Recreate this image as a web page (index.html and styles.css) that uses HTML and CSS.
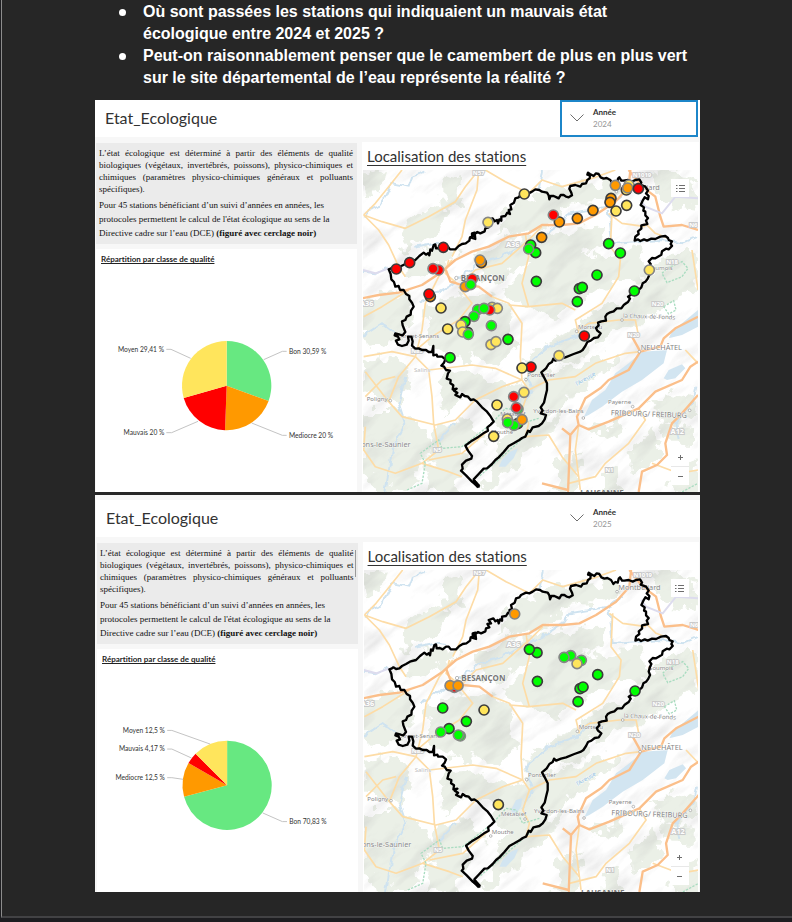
FILE: index.html
```html
<!DOCTYPE html>
<html lang="fr">
<head>
    <meta charset="UTF-8">
    <meta name="viewport" content="width=device-width, initial-scale=1.0">
    <title>Etat écologique des stations</title>
    <link rel="stylesheet" href="styles.css">
</head>
<body>
<main class="page">
    <ul class="questions">
        <li>Où sont passées les stations qui indiquaient un mauvais état écologique entre 2024 et 2025 ?</li>
        <li>Peut-on raisonnablement penser que le camembert de plus en plus vert sur le site départemental de l’eau représente la réalité ?</li>
    </ul>

    <!-- Tableau de bord 2024 -->
    <section class="dashboard">
        <header class="topbar">
            <h2 class="title">Etat_Ecologique</h2>
            <div class="selector selected">
                <svg class="chevron" viewBox="0 0 14 8"><path d="M.5 .5 7 7 13.500 .5"/></svg>
                <div class="field">
                    <label for="annee2024">Année</label>
                    <select id="annee2024"><option>2024</option><option>2025</option></select>
                </div>
            </div>
        </header>
        <div class="columns">
            <div class="left">
                <div class="note">
                    <p class="intro">L’état écologique est déterminé à partir des éléments de qualité biologiques (végétaux, invertébrés, poissons), physico-chimiques et chimiques (paramètres physico-chimiques généraux et polluants spécifiques).</p>
                    <p class="detail">Pour 45 stations bénéficiant d’un suivi d’années en années, les protocoles permettent le calcul de l'état écologique au sens de la Directive cadre sur l’eau (DCE) <b>(figuré avec cerclage noir)</b></p>
                </div>
                <div class="chart">
                    <h3>Répartition par classe de qualité</h3>
                    <svg class="pie" viewBox="3 90 783 666">
                        <path class="bon" d="M395 437V303A134 134 0 0 1 520.800 483.100Z"/>
                        <path class="mediocre" d="M395 437 520.800 483.100A134 134 0 0 1 390.100 570.900Z"/>
                        <path class="mauvais" d="M395 437 390.100 570.900A134 134 0 0 1 266.100 473.700Z"/>
                        <path class="moyen" d="M395 437 266.100 473.700A134 134 0 0 1 395 303Z"/>
                        <path class="leader" d="M506 359 562 334H575M470 549 562 586H575M309 544 230 578H214M287 355 228 328H214"/>
                        <text x="582" y="342">Bon 30,59 %</text>
                        <text x="582" y="594">Mediocre 20 %</text>
                        <text class="end" x="208" y="586">Mauvais 20 %</text>
                        <text class="end" x="207" y="336">Moyen 29,41 %</text>
                    </svg>
                </div>
            </div>
            <div class="right">
                <h2 class="title underlined">Localisation des stations</h2>
                <div class="map">
                    <svg class="mapview" viewBox="3 240 1005 966" preserveAspectRatio="xMidYMin slice">
                        <defs>
                            <filter id="rough" x="-5%" y="-5%" width="110%" height="110%">
                                <feTurbulence type="fractalNoise" baseFrequency="0.025" numOctaves="3" seed="4"/>
                                <feDisplacementMap in="SourceGraphic" scale="75" xChannelSelector="R" yChannelSelector="G"/>
                            </filter>
                            <filter id="wiggle" x="-5%" y="-5%" width="110%" height="110%">
                                <feTurbulence type="fractalNoise" baseFrequency="0.05" numOctaves="1" seed="9"/>
                                <feDisplacementMap in="SourceGraphic" scale="22" xChannelSelector="R" yChannelSelector="G"/>
                            </filter>
                            <filter id="relief" x="0" y="0" width="100%" height="100%">
                                <feTurbulence type="fractalNoise" baseFrequency="0.006 0.020" numOctaves="4" seed="12"/>
                                <feColorMatrix type="matrix" values="0 0 0 0 .45  0 0 0 0 .45  0 0 0 0 .45  2.200 0 0 0 -1.060"/>
                            </filter>
                            <g id="basemap">
                                <path fill="#fff" d="M0 235H1012V1212H0Z"/>
                                <g fill="#ebf0e7" filter="url(#rough)">
                                    <path d="M0 250 60 240 50 300 10 330ZM130 410 200 350 260 360 220 430 150 470 110 490ZM240 260 300 240 290 330 250 370ZM150 490 230 470 300 480 240 530 140 560ZM450 340 540 300 690 280 790 290 760 330 600 350 560 400 440 440 400 420Z"/>
                                    <path d="M0 640 70 600 140 620 150 700 110 750 40 770 0 740ZM330 500 470 440 620 420 730 410 720 470 560 500 420 560 360 580ZM540 500 620 480 720 500 840 470 850 560 700 600 580 680 470 640 420 600ZM200 650 330 600 440 640 460 760 400 830 280 800 190 760Z"/>
                                    <path d="M860 560 900 500 1010 490 1010 600 920 640 850 700 780 700 700 760 640 720 700 660 800 630ZM560 760 640 700 690 720 660 800 560 840 500 890 480 820ZM0 810 100 800 150 870 110 940 0 900ZM0 960 80 960 180 1000 210 1080 130 1200 50 1210 0 1130Z"/>
                                    <path d="M230 860 330 840 440 890 400 960 300 920 240 960ZM220 1010 330 990 370 1040 300 1080 330 1120 280 1210 190 1200ZM400 920 480 880 560 850 700 810 780 800 690 870 590 960 540 1050 430 1150 380 1210 350 1190 430 1050 390 980Z"/>
                                    <path d="M600 1110 660 1090 640 1210 560 1210ZM700 1010 780 980 770 1040 690 1050ZM800 1080 880 1020 890 1090 810 1150ZM870 940 930 910 1010 930 990 990 900 1000ZM720 1150 780 1140 790 1210 720 1210ZM940 1120 1010 1090 1010 1210 930 1210ZM860 250 940 240 1010 290 1010 360 920 350ZM900 1000 990 1010 990 1070 920 1070Z"/>
                                </g>
                                <g transform="rotate(-38 500 720)" opacity=".36">
                                    <rect x="-240" y="-60" width="1500" height="1550" filter="url(#relief)"/>
                                </g>
                                <g fill="#d2e5f1">
                                    <path d="M665 982 690 930 730 900 760 850 800 820 840 785 915 780 905 820 840 870 780 905 720 950 680 975ZM905 865 920 840 960 823 970 835 940 865 915 870ZM930 725 960 700 1008 660V710L960 735 920 745ZM410 1130 420 1110 445 1085 468 1075 455 1105 430 1130ZM445 960 460 930 478 925 475 950 455 980Z"/>
                                </g>
                                <g class="river" filter="url(#wiggle)">
                                    <path d="M190 245 150 260 140 290 90 280 70 320 50 350 20 360 5 380M3 545 40 550 80 535M160 470 210 460 250 465M540 240 530 300M170 640 220 610 260 590 300 560 350 520 420 500 470 470 540 440 600 400 620 370 680 360 740 350 780 320M745 460 800 455 900 450 960 460 1008 440"/>
                                    <path d="M510 895 490 840 500 820 560 770 640 740 690 690M100 730 60 700 0 740M130 860 110 940 130 1000 90 1080 70 1206M220 1060 280 1000M480 960 510 900M1000 890 990 940 940 1000 950 1050M740 360 750 460"/>
                                </g>
                                <g class="minor">
                                    <path d="M5 375 40 340 80 290 120 240M5 375 60 395 130 415 200 380 280 335 310 290 350 240M5 375 50 420 80 465 110 530 130 560M370 240 430 275 500 310 540 270 600 290 700 262 760 240M350 240 345 300 310 390 300 440 270 500M270 510 230 560 190 640 180 720 160 800 110 860 80 935"/>
                                    <path d="M260 510 250 550 290 585M290 590 330 640 290 690 210 740 150 790M5 680 60 650 140 600M300 580 340 540 420 520 500 450 540 410M390 620 440 640 480 700 475 800 480 870M5 800 90 785 160 800 200 840 330 825 400 835 480 870M480 870 420 890 340 930 280 990 220 1005 120 980 80 935 10 845M200 840 210 920 215 1000 230 1080 180 1120"/>
                                    <path d="M10 1010 5 1080 40 1130 100 1150 180 1120 260 1145 300 1160M380 1020 300 1090 200 1110M480 870 500 900 560 870 640 860 700 820 790 790 835 785M500 900 480 960 500 1000 490 1040M490 1040 560 1035 600 1100 650 1160M830 955 850 990 800 1060 730 1120 700 1160 620 1180M750 370 745 470 775 510 770 560 720 640 640 690 650 730"/>
                                    <path d="M490 430 500 500 480 580 500 650 440 645M500 650 600 640 640 660M650 720 680 700 770 690 820 690 830 740M650 1005 640 1080 655 1200M10 920 60 870 100 860M850 400 880 430 920 445M740 370 780 400 850 410M990 480 1008 600M970 780 1008 820M870 1120 950 1150 1008 1140"/>
                                </g>
                                <g class="major">
                                    <path d="M0 625 50 615 110 608 180 585 240 545 280 510 330 485 380 470 440 440 500 430 540 405 600 405 650 400 700 375 760 335 800 290 805 240M800 240 840 290 880 320 895 380 905 410 960 405 1008 420M250 535 265 575 300 585 350 590 390 620"/>
                                    <path d="M1008 680 940 715 905 745 895 770 835 785 800 840 740 870 715 895 670 925 645 980 650 1005 625 1035 618 1206M650 1005 680 1018 740 995 830 955 880 905 960 870 985 830 1008 815M1008 915 960 970 930 1000 910 1060 915 1095 885 1125 840 1145 830 1206M600 1015 625 1035M540 1180 618 1200M810 740 835 785"/>
                                </g>
                                <path class="park" d="M900 550 915 535 960 515 978 535 960 560 915 578ZM905 650 935 632 942 660 920 672ZM135 1200 180 1180 190 1120 175 1090 230 1050 240 1075 300 1070 390 1000 430 955 460 960 480 1000 530 985M500 1030 420 1100 350 1160M960 1206 1008 1180"/>
                                <path fill="none" stroke="#dddcee" stroke-width="6" d="M835 330 850 350 900 370 940 320 1008 325M3 540 40 550 80 535"/>
                                <g class="tags">
                                    <text x="350" y="254">N57</text><text x="840" y="260">N1019</text><text x="452" y="472" class="big">A36</text>
                                    <text x="14" y="648" class="big">A36</text><text x="994" y="411">N6</text><text x="930" y="523">N18</text>
                                    <text x="887" y="648">N20</text><text x="815" y="741">N20</text><text x="226" y="1087">N5</text>
                                    <text x="946" y="1031" class="big">A12</text><text x="742" y="1147">N1</text><text x="165" y="790">N83</text>
                                </g>
                                <g class="town">
                                    <circle cx="763" cy="305" r="4"/><circle cx="283" cy="564" r="5"/><circle cx="780" cy="690" r="4"/><circle cx="644" cy="724" r="4"/>
                                    <circle cx="832" cy="785" r="4"/><circle cx="492" cy="869" r="4"/><circle cx="812" cy="950" r="4"/><circle cx="664" cy="984" r="4"/>
                                    <circle cx="487" cy="987" r="4"/><circle cx="384" cy="1038" r="4"/><circle cx="85" cy="932" r="4"/><circle cx="983" cy="961" r="4"/>
                                    <text x="767" y="299" class="big">Montbéliard</text>
                                    <text x="296" y="573" class="capital">BESANÇON</text>
                                    <text x="856" y="541">Goumois</text>
                                    <text x="783" y="683" transform="rotate(2 783 683)">la Chaux-de-Fonds</text>
                                    <text x="648" y="717">Morteau</text>
                                    <text x="836" y="780" class="big">NEUCHÂTEL</text>
                                    <text x="496" y="862">Pontarlier</text>
                                    <text x="738" y="941">Payerne</text>
                                    <text x="746" y="976" class="big" transform="rotate(2 746 976)">FRIBOURG/ FREIBURG</text>
                                    <text x="514" y="970">Yverdon-les-Bains</text>
                                    <text x="415" y="979">Métabief</text>
                                    <text x="387" y="1033">Mouthe</text>
                                    <text x="14" y="933">Poligny</text>
                                    <text x="-14" y="1070" class="big">Lons-le-Saunier</text>
                                    <text x="115" y="745">Arc-et-Senans</text>
                                    <text x="156" y="845" class="faint">Salins</text>
                                    <text x="655" y="1218" class="capital">LAUSANNE</text>
                                    <text x="645" y="888" class="water" transform="rotate(-30 645 888)">l’Areuse</text>
                                </g>
                                <path class="limit" d="M80 538 86 536 92 532 100 537 110 535 118 528 130 522 144 514 160 510 172 498 185 488 192 494 198 490 202 496 205 478 210 482 215 465 220 463 222 475 231 474 240 478 250 470 258 470 264 478 280 478 290 468 300 462 311 460 322 452 324 442 330 440 330 430 338 428 340 447 330 444 336 434 346 426 355 430 368 424 370 415 380 412 374 402 385 400 378 390 392 385 398 394 405 390 408 400 412 388 418 392 418 380 430 378 436 368 444 372 440 360 448 358 445 345 456 338 460 325 470 322 475 315 490 308 500 310 510 305 520 298 532 300 540 305 555 308 560 316 562 328 566 318 575 318 584 322 590 325 596 315 605 315 612 320 620 322 630 316 628 308 622 296 625 288 640 285 655 290 660 282 672 280 676 270 683 265 684 256 676 254 678 248 684 252 695 258 702 250 710 252 716 262 725 266 734 264 745 270 752 282 758 276 765 278 768 266 772 262 778 272 785 272 798 270 810 275 820 270 832 268 838 278 834 284 850 290 858 302 852 310 860 318 858 328 848 322 842 332 836 345 846 352 844 362 850 365 850 376 858 384 852 392 856 402 838 406 838 416 828 424 830 432 820 440 818 452 828 448 835 453 846 448 855 452 868 446 880 447 895 440 910 438 918 444 920 450 930 454 926 462 930 468 920 478 912 476 900 484 898 494 888 500 880 505 870 504 860 514 866 522 862 530 858 545 862 555 856 568 850 575 842 580 838 592 830 600 820 606 810 612 798 620 804 626 798 636 786 644 778 655 764 655 755 664 742 668 735 672 730 680 732 692 718 694 708 698 710 706 702 714 706 722 716 730 708 742 696 744 686 752 676 756 670 768 662 780 655 785 635 792 610 802 595 806 580 812 574 806 570 816 560 822 552 835 538 847 546 862 555 880 555 900 550 920 546 938 536 952 542 962 536 970 552 975 548 988 540 1000 530 1008 512 1012 504 1026 498 1022 490 1040 480 1044 472 1050 455 1060 440 1068 425 1086 410 1102 400 1110 390 1122 375 1135 365 1136 350 1152 335 1168 350 1190 330 1175 312 1156 297 1142 302 1136 300 1124 312 1112 328 1106 330 1098 318 1082 310 1067 330 1052 350 1040 364 1030 378 1022 376 1012 386 1004 395 995 385 978 375 965 360 952 345 935 335 928 326 930 318 920 308 918 300 912 295 922 280 915 286 908 276 902 284 896 272 898 274 886 265 880 266 870 254 866 258 850 264 842 252 840 246 830 238 827 246 818 250 808 240 800 226 800 224 794 214 796 214 768 210 786 200 786 192 780 180 780 170 775 160 776 150 767 152 754 148 740 138 740 140 752 134 764 120 768 108 764 102 752 112 748 108 740 98 736 100 730 114 734 122 736 130 726 122 706 120 694 130 690 134 680 146 674 147 662 155 650 150 638 142 628 142 618 132 612 125 600 114 600 110 588 100 590 96 576 88 568 86 552Z"/>
                                <path d="m336 1166 19 20-9 9-18-19Z"/>
                            </g>
                        </defs>
                        <use href="#basemap"/>
                        <g class="stations" id="stations2024"></g>
                    </svg>
                    <button class="legend" type="button" aria-label="Légende"><svg viewBox="0 0 9 9"><path d="M0 1.500h1.500M3 1.500h6M0 4.500h1.500M3 4.500h6M0 7.500h1.500M3 7.500h6"/></svg></button>
                    <div class="zoom">
                        <button type="button" aria-label="Zoom avant"><svg viewBox="0 0 9 9"><path d="M2 4.500h5M4.500 2v5"/></svg></button>
                        <button type="button" aria-label="Zoom arrière"><svg viewBox="0 0 9 9"><path d="M2 4.500h5"/></svg></button>
                    </div>
                </div>
            </div>
        </div>
    </section>

    <!-- Tableau de bord 2025 -->
    <section class="dashboard second">
        <header class="topbar">
            <h2 class="title">Etat_Ecologique</h2>
            <div class="selector">
                <svg class="chevron" viewBox="0 0 14 8"><path d="M.5 .5 7 7 13.500 .5"/></svg>
                <div class="field">
                    <label for="annee2025">Année</label>
                    <select id="annee2025"><option>2025</option><option>2024</option></select>
                </div>
            </div>
        </header>
        <div class="columns">
            <div class="left">
                <div class="note scrolling">
                    <p class="intro">L’état écologique est déterminé à partir des éléments de qualité biologiques (végétaux, invertébrés, poissons), physico-chimiques et chimiques (paramètres physico-chimiques généraux et polluants spécifiques).</p>
                    <p class="detail">Pour 45 stations bénéficiant d’un suivi d’années en années, les protocoles permettent le calcul de l'état écologique au sens de la Directive cadre sur l’eau (DCE) <b>(figuré avec cerclage noir)</b></p>
                </div>
                <div class="chart">
                    <h3>Répartition par classe de qualité</h3>
                    <svg class="pie" viewBox="21 -90 783 666">
                        <path class="bon" d="M412 256V122A134 134 0 1 1 282.600 290.700Z"/>
                        <path class="mediocre" d="M412 256 282.600 290.700A134 134 0 0 1 296 189Z"/>
                        <path class="mauvais" d="M412 256 296 189A134 134 0 0 1 317.200 161.200Z"/>
                        <path class="moyen" d="M412 256 317.200 161.200A134 134 0 0 1 412 122Z"/>
                        <path class="leader" d="M519 339 578 365H592M361 132 246 91H232M305 174 246 147H232M280 238 246 233H232"/>
                        <text x="599" y="373">Bon 70,83 %</text>
                        <text class="end" x="225" y="99">Moyen 12,5 %</text>
                        <text class="end" x="225" y="154">Mauvais 4,17 %</text>
                        <text class="end" x="225" y="240">Mediocre 12,5 %</text>
                    </svg>
                </div>
            </div>
            <div class="right">
                <h2 class="title underlined">Localisation des stations</h2>
                <div class="map">
                    <svg class="mapview" viewBox="3 240 1005 966" preserveAspectRatio="xMidYMin slice">
                        <use href="#basemap"/>
                        <g class="stations" id="stations2025"></g>
                    </svg>
                    <button class="legend" type="button" aria-label="Légende"><svg viewBox="0 0 9 9"><path d="M0 1.500h1.500M3 1.500h6M0 4.500h1.500M3 4.500h6M0 7.500h1.500M3 7.500h6"/></svg></button>
                    <div class="zoom">
                        <button type="button" aria-label="Zoom avant"><svg viewBox="0 0 9 9"><path d="M2 4.500h5M4.500 2v5"/></svg></button>
                        <button type="button" aria-label="Zoom arrière"><svg viewBox="0 0 9 9"><path d="M2 4.500h5"/></svg></button>
                    </div>
                </div>
            </div>
        </div>
    </section>
</main>
<script src="stations.js"></script>
</body>
</html>
```

FILE: styles.css
```css
* {
    box-sizing: border-box;
}
html {
    background-color: #1d1d20;
}
body {
    margin: 0;
    font-family: Lato, "Open Sans", sans-serif;
    font-variant-ligatures: none;
}
h2, h3, p {
    margin: 0;
}
.page {
    margin-left: 1px;
    padding: 0 92px 24px 93px;
    background-color: #262626;
    border-left: 1px solid #8c8c8c;
    border-bottom: 2px solid #424244;
}
.questions {
    margin: 0;
    padding: 1px 8px 11px 48px;
    list-style: none;
    font: bold 16px/22px "Liberation Sans", Arial, sans-serif;
    color: #fff;
}
.questions li {
    position: relative;
}
.questions li::before {
    content: "";
    position: absolute;
    top: 8px;
    left: -24px;
    width: 7px;
    height: 7px;
    border-radius: 50%;
    background-color: #fff;
}

/* Tableaux de bord */
.dashboard {
    padding: 0 1px;
    background-color: #f7f7f7;
}
.dashboard.second {
    margin-top: 3px;
    padding: 5px 1px 0 2px;
}
.topbar {
    display: flex;
    justify-content: space-between;
    align-items: center;
    height: 37px;
    margin: 0 -1px 5px -1px;
    padding-left: 10px;
    background-color: #fff;
}
.title {
    font-size: 15px;
    font-weight: normal;
    line-height: 28px;
    color: #323232;
}
.topbar .title {
    padding-bottom: 2px;
    font-size: 16px;
}
.selector {
    display: flex;
    align-items: center;
    gap: 9px;
    width: 138px;
    height: 37px;
    margin-right: 2px;
    padding: 0 0 2px 8px;
    border: 2px solid transparent;
}
.selected {
    border-color: #1c86c9;
}
.chevron {
    width: 14px;
    height: 8px;
    fill: none;
    stroke: #6e6e6e;
}
.field {
    display: flex;
    flex-direction: column;
    flex: 1;
    font-size: 8px;
    line-height: 12px;
}
.field label {
    font-weight: bold;
    color: #323232;
}
.field select {
    appearance: none;
    padding: 0;
    border: none;
    outline: none;
    background: none;
    font: inherit;
    color: #959595;
}
.columns {
    display: grid;
    grid-template-columns: 261fr 337fr;
    gap: 5px;
}
.left {
    display: flex;
    flex-direction: column;
    gap: 5px;
    padding-top: 1px;
}
.note {
    padding: 4px 4px 4px 3px;
    background-color: #ebebeb;
    font-family: "Liberation Serif", "Times New Roman", serif;
    font-size: 9px;
    color: #111;
}
.scrolling {
    background-image: linear-gradient(#999, #999);
    background-size: 1px 27px;
    background-position: right 2px top 7px;
    background-repeat: no-repeat;
}
.intro {
    line-height: 12px;
    text-align: justify;
}
.detail {
    margin-top: 3px;
    line-height: 14px;
}
.chart {
    flex: 1;
    background-color: #fff;
}
.chart h3 {
    padding: 4px 5px 5px;
    font-size: 8px;
    line-height: 12px;
    text-decoration: underline;
    color: #222;
}
.pie {
    display: block;
    width: 100%;
    height: 222px;
}
.pie text {
    font-size: 20px;
    fill: #323232;
}
.pie .end {
    text-anchor: end;
}
.leader {
    fill: none;
    stroke: #c4c4c4;
    stroke-width: 3;
}
.pie .bon {
    fill: #67e881;
}
.moyen {
    fill: #ffe55c;
}
.mediocre {
    fill: #ff9900;
}
.mauvais {
    fill: #ff0000;
}

/* Carte */
.right {
    padding: 0 1px;
    background-color: #fff;
}
.right .title {
    padding-left: 4px;
}
.underlined {
    text-decoration: underline;
    text-decoration-thickness: 1px;
    text-underline-offset: 3px;
}
.map {
    position: relative;
}
.mapview {
    display: block;
    width: 100%;
    height: 322px;
}
.stations circle {
    stroke: #858585;
    stroke-width: 5;
}
.stations .dce {
    stroke: #3c3c3c;
}
.stations .bon {
    fill: #00ff00;
}
.river {
    fill: none;
    stroke: #cfe3f0;
    stroke-width: 6;
}
.minor {
    fill: none;
    stroke: #fddca6;
    stroke-width: 5;
    stroke-linejoin: round;
}
.major {
    fill: none;
    stroke: #fbbf8a;
    stroke-width: 7;
    stroke-linejoin: round;
}
.park {
    fill: none;
    stroke: #a9dcc0;
    stroke-width: 4;
    stroke-dasharray: 7 4;
}
.limit {
    fill: none;
    stroke: #000;
    stroke-width: 7;
    stroke-linejoin: round;
}
.tags text, .town text {
    font-family: "Noto Sans", sans-serif;
    font-size: 18px;
    paint-order: stroke;
    stroke: #fff;
    stroke-width: 2;
}
.tags text {
    font-weight: bold;
    text-anchor: middle;
    fill: #fff;
    stroke: #cacaca;
    stroke-width: 6;
}
.town text {
    fill: #868686;
}
.town circle {
    fill: #fff;
    stroke: #999;
    stroke-width: 2;
}
.tags .big, .town .big {
    font-size: 22px;
}
.town .capital {
    font-size: 24px;
    font-weight: bold;
    fill: #777;
}
.town .faint {
    fill: #c0c0c0;
}
.town .water {
    fill: #8dbcdc;
}
.legend, .zoom {
    position: absolute;
    right: 9px;
}
.legend {
    top: 9px;
}
.zoom {
    bottom: 7px;
    display: flex;
    flex-direction: column;
    gap: 1px;
    background-color: #e8e8e8;
}
.map button {
    display: flex;
    align-items: center;
    justify-content: center;
    width: 18px;
    height: 18px;
    padding: 0;
    border: none;
    background-color: #fff;
}
.map button svg {
    width: 9px;
    height: 9px;
    fill: none;
    stroke: #6e6e6e;
}
```

FILE: stations.js
```js
// x, y, classe, 1 = suivi DCE (cerclage noir)
const stations = {
    stations2024: [
        [487, 312, 'moyen', 1], [378, 397, 'moyen', 0], [244, 472, 'mauvais', 1], [143, 518, 'mauvais', 1],
        [103, 537, 'mauvais', 1], [230, 540, 'mauvais', 0], [213, 536, 'mauvais', 0], [358, 518, 'mediocre', 1],
        [354, 510, 'mediocre', 0], [331, 567, 'mauvais', 0], [310, 590, 'mediocre', 0], [326, 584, 'bon', 0],
        [205, 620, 'mediocre', 1], [201, 612, 'mauvais', 1], [237, 654, 'moyen', 1], [390, 652, 'moyen', 0],
        [406, 655, 'moyen', 0], [383, 660, 'mauvais', 0], [347, 659, 'bon', 0], [366, 655, 'bon', 0],
        [336, 679, 'bon', 0], [309, 695, 'bon', 1], [297, 705, 'moyen', 0], [388, 707, 'bon', 0],
        [257, 717, 'moyen', 1], [317, 727, 'bon', 1], [302, 726, 'moyen', 0], [319, 733, 'bon', 0],
        [387, 764, 'moyen', 0], [402, 755, 'moyen', 0], [438, 748, 'bon', 1], [264, 803, 'bon', 1],
        [507, 831, 'mauvais', 1], [480, 834, 'moyen', 1], [486, 907, 'moyen', 0], [455, 920, 'mauvais', 0],
        [468, 957, 'bon', 0], [463, 953, 'mauvais', 0], [405, 945, 'moyen', 1], [436, 987, 'moyen', 0],
        [467, 1001, 'bon', 1], [480, 989, 'mediocre', 0], [456, 1006, 'bon', 0], [437, 998, 'bon', 0],
        [395, 1039, 'moyen', 1], [506, 465, 'bon', 1], [521, 488, 'bon', 1], [500, 477, 'bon', 0],
        [539, 442, 'mediocre', 1], [592, 396, 'mediocre', 1], [574, 375, 'mauvais', 0], [646, 385, 'mediocre', 1],
        [693, 361, 'mediocre', 1], [747, 325, 'mediocre', 1], [744, 337, 'mediocre', 1], [760, 286, 'mediocre', 0],
        [801, 285, 'moyen', 0], [793, 300, 'moyen', 1], [797, 294, 'mediocre', 0], [829, 296, 'mauvais', 1],
        [762, 363, 'moyen', 1], [794, 346, 'moyen', 1], [740, 461, 'bon', 1], [775, 489, 'bon', 1],
        [705, 555, 'bon', 1], [652, 596, 'bon', 1], [661, 592, 'bon', 1], [646, 635, 'bon', 1],
        [523, 574, 'bon', 1], [862, 540, 'moyen', 0], [817, 603, 'bon', 1], [591, 797, 'moyen', 0],
        [667, 738, 'mauvais', 1]
    ],
    stations2025: [
        [456, 372, 'mediocre', 0], [523, 488, 'bon', 1], [500, 478, 'bon', 1], [624, 497, 'bon', 0],
        [604, 502, 'bon', 0], [656, 511, 'bon', 0], [643, 521, 'moyen', 0], [705, 554, 'bon', 1],
        [652, 596, 'bon', 1], [661, 591, 'bon', 1], [646, 635, 'bon', 1], [817, 603, 'bon', 1],
        [524, 574, 'bon', 1], [275, 592, 'mauvais', 0], [262, 587, 'mediocre', 0], [286, 587, 'mediocre', 0],
        [240, 654, 'bon', 1], [364, 660, 'moyen', 1], [311, 694, 'bon', 1], [259, 716, 'bon', 1],
        [234, 726, 'bon', 0], [293, 738, 'bon', 0], [287, 735, 'bon', 0], [407, 944, 'moyen', 1]
    ]
};

// Place les stations sur chaque carte
for (const id in stations) {
    const group = document.getElementById(id);
    stations[id].forEach(([x, y, classe, dce]) => {
        const circle = document.createElementNS('http://www.w3.org/2000/svg', 'circle');
        circle.setAttribute('cx', x);
        circle.setAttribute('cy', y);
        circle.setAttribute('r', 15);
        circle.setAttribute('class', dce ? classe + ' dce' : classe);
        group.appendChild(circle);
    });
}
```
